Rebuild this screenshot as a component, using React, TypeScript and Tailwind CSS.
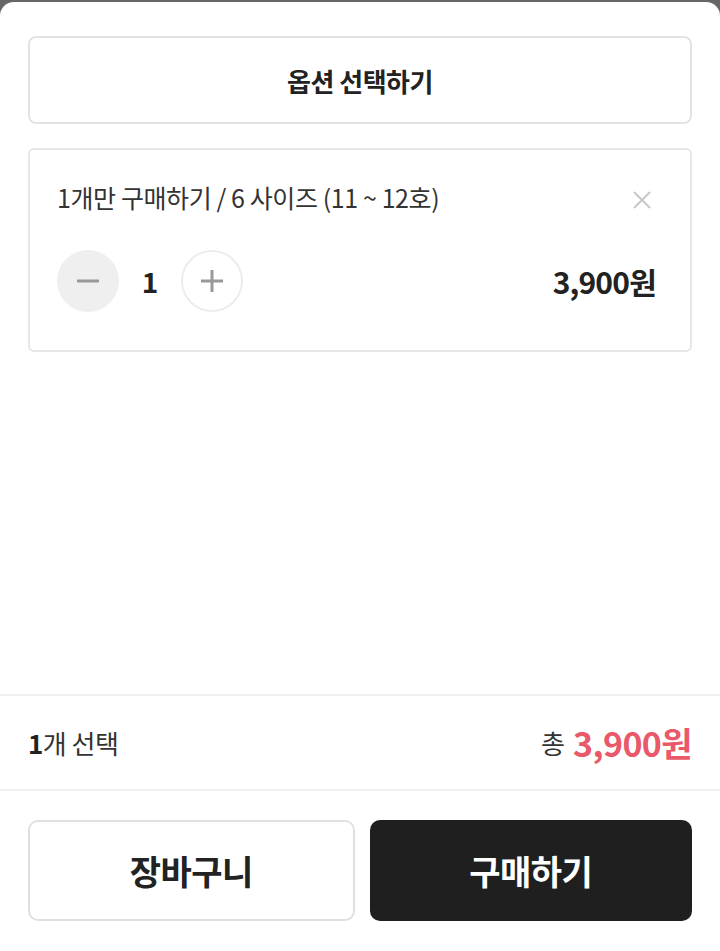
import React, { useState } from 'react';

const font = { fontFamily: '"Noto Sans CJK KR", "Noto Sans", sans-serif' };

export default function App() {
  const [qty, setQty] = useState(1);
  const price = 3900;
  const total = (price * qty).toLocaleString('ko-KR');

  return (
    <div className="w-[720px] h-[951px] bg-[#666666] pt-[2px]" style={font}>
      <div className="h-full bg-white rounded-t-[14px] flex flex-col">
        <div className="px-[28px] pt-[34px] flex flex-col gap-[24px]">
          <button className="h-[88px] w-full border-2 border-[#e3e3e3] rounded-[8px] text-[26px] font-bold text-[#222] tracking-[-0.5px] flex items-center justify-center">
            옵션 선택하기
          </button>

          {/* selected option */}
          <div className="h-[204px] border-2 border-[#e6e6e6] rounded-[6px] pl-[27px] pr-[34px] pt-[32px] flex flex-col">
            <div className="flex items-start justify-between">
              <span className="text-[25px] leading-[30px] text-[#333] tracking-[-0.4px]">
                1개만 구매하기 / 6 사이즈 (11 ~ 12호)
              </span>
              <button className="mt-[8px] mr-[4px] text-[#c8c8c8]">
                <svg width="20" height="20" viewBox="0 0 20 20" fill="none" stroke="currentColor" strokeWidth="2">
                  <path d="M2 2l16 16M18 2L2 18" />
                </svg>
              </button>
            </div>
            <div className="mt-[38px] flex items-center justify-between">
              <div className="flex items-center">
                <button
                  onClick={() => setQty(Math.max(1, qty - 1))}
                  className="w-[62px] h-[62px] rounded-full bg-[#efefef] flex items-center justify-center text-[#999]"
                >
                  <svg width="24" height="24" viewBox="0 0 24 24" fill="none" stroke="currentColor" strokeWidth="3">
                    <path d="M1 12h22" />
                  </svg>
                </button>
                <span className="w-[62px] text-center text-[28px] font-bold text-[#222]">{qty}</span>
                <button
                  onClick={() => setQty(qty + 1)}
                  className="w-[62px] h-[62px] rounded-full border-2 border-[#ededed] flex items-center justify-center text-[#999]"
                >
                  <svg width="24" height="24" viewBox="0 0 24 24" fill="none" stroke="currentColor" strokeWidth="3">
                    <path d="M1 12h22M12 1v22" />
                  </svg>
                </button>
              </div>
              <span className="text-[30px] font-bold text-[#222] tracking-[-0.8px]">{total}원</span>
            </div>
          </div>
        </div>

        <div className="flex-1" />

        <div className="h-[97px] border-t-2 border-b-2 border-[#f0f0f0] px-[28px] flex items-center justify-between">
          <span className="text-[26px] text-[#333] tracking-[-0.5px]">
            <b className="font-bold text-[#222]">1</b>개 선택
          </span>
          <span className="flex items-center gap-[8px]">
            <span className="text-[26px] text-[#333]">총</span>
            <span className="text-[34px] font-bold text-[#e9596a] tracking-[-0.6px]">{total}원</span>
          </span>
        </div>

        <div className="px-[28px] pt-[29px] pb-[30px] flex gap-[15px]">
          <button className="flex-1 h-[101px] border-2 border-[#e0e0e0] rounded-[10px] text-[34px] font-bold text-[#222] tracking-[-0.5px]">
            장바구니
          </button>
          <button className="flex-1 h-[101px] bg-[#1f1f1f] rounded-[10px] text-[34px] font-bold text-white tracking-[-0.5px]">
            구매하기
          </button>
        </div>
      </div>
    </div>
  );
}
